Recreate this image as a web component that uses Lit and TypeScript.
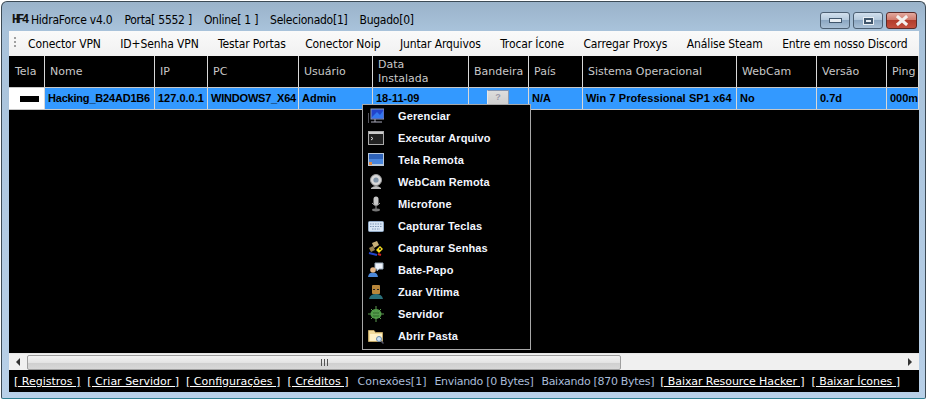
import { LitElement, html, css, svg } from "lit";
import { customElement } from "lit/decorators.js";

const toolbar = ["Conector VPN", "ID+Senha VPN", "Testar Portas", "Conector Noip", "Juntar Arquivos", "Trocar Ícone", "Carregar Proxys", "Análise Steam", "Entre em nosso Discord"];
const cols = [
  ["Tela", 36, "Hacking"], ["Nome", 110, "Hacking_B24AD1B6"], ["IP", 53, "127.0.0.1"], ["PC", 91, "WINDOWS7_X64"],
  ["Usuário", 74, "Admin"], ["Data\nInstalada", 96, "18-11-09"], ["Bandeira", 60, ""], ["País", 54, "N/A"],
  ["Sistema Operacional", 154, "Win 7 Professional SP1 x64"], ["WebCam", 80, "No"], ["Versão", 70, "0.7d"], ["Ping", 32, "000m"],
];

const icons: Record<string, unknown> = {
  gerenciar: svg`<rect x="3" y="1" width="13" height="10" fill="#2244cc" stroke="#8899bb"/><path d="M4 9 L9 4 L12 7 L15 3 V10 H4Z" fill="#3377ee"/><path d="M0 5 V15 M3 14 H14 M7 11 V14" stroke="#aab" fill="none"/>`,
  executar: svg`<rect x="0.5" y="1.5" width="15" height="13" fill="#222" stroke="#aaa"/><rect x="1" y="2" width="14" height="2" fill="#ccc"/><path d="M3 7 L5 8.5 L3 10" stroke="#ddd" fill="none"/>`,
  tela: svg`<rect x="0.5" y="1.5" width="15" height="12" fill="#4a86dc" stroke="#b8c8dc"/><rect x="1" y="2" width="14" height="5" fill="#2e62b8"/><rect x="1" y="12" width="14" height="2" fill="#b8c8d8"/><rect x="1" y="10" width="3" height="3" fill="#e08844"/>`,
  webcam: svg`<circle cx="8" cy="6" r="5.5" fill="#d8d8d8" stroke="#999"/><circle cx="8" cy="6" r="2.6" fill="#8094a8"/><path d="M3 14 Q8 10 13 14 V15 H3Z" fill="#bbb"/>`,
  mic: svg`<rect x="5.5" y="0.5" width="5" height="9" rx="2.5" fill="#c8c8c8"/><path d="M4 7 Q8 12 12 7 M8 10 V13" stroke="#999" fill="none"/><ellipse cx="8" cy="14" rx="4" ry="1.4" fill="#777"/>`,
  teclas: svg`<rect x="0.5" y="3.5" width="15" height="10" rx="1" fill="#d8e6f6" stroke="#90a8c4"/><path d="M2 6 H14 M2 8.5 H14 M4 11 H12" stroke="#7f96b4" stroke-dasharray="1.5 1"/>`,
  senhas: svg`<path d="M4 3 L9 1 L11 5 L6 8Z" fill="#c8b078"/><path d="M1 8 L5 6 L7 10 L3 12Z" fill="#9a8454"/><path d="M8 10 L12 6 L15 9 L11 13Z" fill="#f4dc1c"/><circle cx="12" cy="9" r="1" fill="#222"/><path d="M1 13 L9 15" stroke="#2244cc" stroke-width="2"/><path d="M10 14 L13 15" stroke="#cc2222" stroke-width="2"/>`,
  chat: svg`<path d="M7 1 H15 V7 H11 L9 9 V7 H7Z" fill="#eef3fb" stroke="#9ab"/><circle cx="5" cy="8" r="2.8" fill="#e8b888"/><path d="M0 15 Q1 10 5 11 Q9 10 10 15Z" fill="#4d88d8"/>`,
  zuar: svg`<rect x="4" y="1" width="8" height="9" rx="1" fill="#b8863a"/><rect x="5" y="5" width="2" height="1" fill="#222"/><rect x="9" y="5" width="2" height="1" fill="#222"/><path d="M1 15 Q2 10 8 10 Q14 10 15 15Z" fill="#2a6f7a"/>`,
  servidor: svg`<ellipse cx="8" cy="8" rx="5.5" ry="5" fill="#4d9a44"/><path d="M3 3 L13 13 M13 3 L3 13 M8 0 V16 M0 8 H16" stroke="#5c9a50" stroke-width="1"/><path d="M5 7 H11 M5 10 H11" stroke="#2c6a2a"/>`,
  pasta: svg`<path d="M0.5 2.5 H6 L7.5 4.5 H14.5 V13.5 H0.5Z" fill="#f2dc9c" stroke="#bfa566"/><rect x="2" y="6" width="12" height="7" fill="#fff2c8"/><circle cx="11" cy="11" r="2.5" fill="#cfe4f4" stroke="#6688aa"/><path d="M13 13 L15.5 15.5" stroke="#556" stroke-width="1.4"/>`,
};

const menu: [string, string][] = [
  ["Gerenciar", "gerenciar"], ["Executar Arquivo", "executar"], ["Tela Remota", "tela"], ["WebCam Remota", "webcam"],
  ["Microfone", "mic"], ["Capturar Teclas", "teclas"], ["Capturar Senhas", "senhas"], ["Bate-Papo", "chat"],
  ["Zuar Vítima", "zuar"], ["Servidor", "servidor"], ["Abrir Pasta", "pasta"],
];

@customElement("app-root")
export class AppRoot extends LitElement {
  static styles = css`
    :host { display: block; width: 929px; height: 403px; background: #fff; overflow: hidden; font-family: "DejaVu Sans", sans-serif; }
  `;
  render() {
    return html`<hf-window></hf-window>`;
  }
}

@customElement("hf-window")
export class HfWindow extends LitElement {
  static styles = css`
    :host { display: block; padding: 1px 2px 3px 1px; }
    .win { position: relative; width: 925px; height: 398px; box-sizing: border-box; border: 1px solid #3c4a55; border-bottom-color: #2f7f92; border-radius: 6px 6px 2px 2px;
      background: linear-gradient(180deg, #9ab3ca 0%, #a8c2da 7%, #b8d0e8 100%); padding: 0 7px 6px 7px; display: flex; flex-direction: column; }
    .title { height: 29px; flex: none; display: flex; align-items: center; padding-left: 2px; padding-top: 7px; box-sizing: border-box; font: 12px "DejaVu Sans Condensed", "DejaVu Sans", sans-serif; font-stretch: condensed; letter-spacing: -0.25px; color: #000; gap: 12px; position: relative; }
    .logo { font: bold 12px/1 "Liberation Mono", monospace; letter-spacing: -2.2px; color: #111; width: 18px; margin-right: -11px; margin-left: 1px; }
    .caps { position: absolute; right: 1px; top: 10px; display: flex; gap: 3px; }
    .cap { width: 30px; height: 17px; box-sizing: border-box; border: 1px solid #4c5f72; border-radius: 3px; display: flex; align-items: center; justify-content: center;
      background: linear-gradient(180deg, #d2e0ee 0%, #b5c9dc 45%, #8ca7c2 50%, #a9c0d6 100%); }
    .cap.close { width: 31px; background: linear-gradient(180deg, #e3a99f 0%, #d07a6c 45%, #b23c2c 50%, #c4503e 100%); border-color: #5a2a28; }
    .min { width: 11px; height: 3px; background: #e8eef4; border: 1px solid #40566c; }
    .max { width: 9px; height: 6px; border: 2px solid #40566c; background: #e8eef4; box-shadow: 0 0 0 1px #e8eef4; box-sizing: border-box; }
    .toolbar { height: 25px; flex: none; box-sizing: border-box; background: linear-gradient(180deg, #fafafa, #f1f1f1); display: flex; align-items: center; padding-left: 19px; gap: 19.5px; font: 12px "DejaVu Sans Condensed", "DejaVu Sans", sans-serif; font-stretch: condensed; letter-spacing: -0.12px; color: #000; position: relative; width: 910px; white-space: nowrap; }
    .grip { position: absolute; left: 5px; top: 6px; width: 2px; height: 12px; background: repeating-linear-gradient(180deg, #a0a0a0 0 2px, transparent 2px 4px); }
    .table { flex: 1; background: #000; width: 910px; overflow: hidden; min-height: 0; }
    .head { display: flex; height: 31px; }
    .hc { box-sizing: border-box; flex: none; border-right: 1px solid #d8d8d8; color: #c8c8c8; font: 11px/14px "DejaVu Sans", sans-serif; padding-left: 5px; display: flex; align-items: center; white-space: pre; }
    .hc:first-child { padding-left: 6px; }
    .row { display: flex; height: 23px; background: #3399ff; border-top: 1px solid #c8c8c8; border-bottom: 1px solid #c8c8c8; box-sizing: border-box; }
    .rc { box-sizing: border-box; flex: none; border-right: 1px solid #d8d8d8; color: #000; font: bold 11px/21px "Liberation Sans", sans-serif; padding-left: 3px; white-space: nowrap; overflow: hidden; display: flex; align-items: center; }
    .rc.tight { letter-spacing: -0.2px; }
    .rc.wide { letter-spacing: 0.08px; }
    .thumbcell { background: #fff; justify-content: center; padding: 0 0 0 6px; }
    .shot { width: 19px; height: 6px; background: #000; filter: blur(0.5px); }
    .flag { width: 22px; height: 15px; margin: -2px auto 0 18px; background: linear-gradient(180deg, #ddd, #cfcfcf); border: 1px solid #e8e8e8; border-right-color: #8a9ab0; border-top-color: #7f94b4; box-sizing: border-box; color: #99a; font: bold 9px/13px "Liberation Sans", sans-serif; text-align: center; }
    .sb { height: 17px; flex: none; width: 910px; background: #f0f0f0; display: flex; align-items: center; border-top: 1px solid #e6e6e6; box-sizing: border-box; position: relative; }
    .arrow { width: 18px; flex: none; display: flex; justify-content: center; }
    .thumb { width: 594px; height: 15px; box-sizing: border-box; flex: none; border: 1px solid #9f9f9f; border-radius: 2px; background: linear-gradient(180deg, #f4f4f4, #e4e4e4 50%, #cfcfcf 51%, #d8d8d8); display: flex; align-items: center; justify-content: center; }
    .grips { width: 7px; height: 7px; background: repeating-linear-gradient(90deg, #555 0 1px, transparent 1px 3px); }
    .spacer { flex: 1; }
    .status { height: 22px; flex: none; width: 910px; box-sizing: border-box; background: #000; display: flex; align-items: center; padding-left: 5px; gap: 7px; font: 11px "DejaVu Sans", sans-serif; white-space: nowrap; }
    .status a { color: #fff; text-decoration: underline; }
    .status a.n { letter-spacing: -0.08px; }
    .status a.h { margin-left: -1px; }
    .status span { color: #a9bcd8; }
    .status span.t { letter-spacing: -0.3px; margin-left: 1px; }
    .status span.c { margin-left: 2px; }
    .menu { position: absolute; left: 360px; top: 102px; width: 169px; height: 246px; box-sizing: border-box; background: #000; border: 1px solid #a8a8a8; padding: 0; z-index: 2; }
    .mi { height: 22px; display: flex; align-items: center; padding-left: 5px; gap: 14px; color: #f2f6ff; font: bold 11px "Liberation Sans", sans-serif; letter-spacing: 0.12px; }
    .mi svg { width: 16px; height: 16px; flex: none; }
  `;
  render() {
    return html`<div class="win">
      <div class="title">
        <span class="logo">HF4</span><span>HidraForce v4.0</span><span>Porta[ 5552 ]</span><span>Online[ 1 ]</span><span>Selecionado[1]</span><span>Bugado[0]</span>
        <div class="caps">
          <div class="cap"><div class="min"></div></div>
          <div class="cap"><div class="max"></div></div>
          <div class="cap close"><svg width="14" height="11" viewBox="0 0 14 11"><path d="M3 2 L11 9 M11 2 L3 9" stroke="#f4f0ee" stroke-width="3" stroke-linecap="square"/></svg></div>
        </div>
      </div>
      <div class="toolbar"><div class="grip"></div>${toolbar.map((t) => html`<span>${t}</span>`)}</div>
      <div class="table">
        <div class="head">${cols.map(([n, w]) => html`<div class="hc" style="width:${w}px">${n}</div>`)}</div>
        <div class="row">${cols.map(([n, w, v], i) =>
          i === 0
            ? html`<div class="rc thumbcell" style="width:${w}px"><div class="shot"></div></div>`
            : i === 6
            ? html`<div class="rc" style="width:${w}px;padding:0"><div class="flag">?</div></div>`
            : html`<div class="rc ${i === 1 || i === 3 ? "tight" : i === 8 ? "wide" : ""}" style="width:${w}px">${v}</div>`
        )}</div>
      </div>
      <div class="sb">
        <div class="arrow"><svg width="5" height="8" viewBox="0 0 5 8"><path d="M4 0 V8 L0 4Z" fill="#333"/></svg></div>
        <div class="thumb"><div class="grips"></div></div>
        <div class="spacer"></div>
        <div class="arrow"><svg width="5" height="8" viewBox="0 0 5 8"><path d="M0 0 V8 L4 4Z" fill="#333"/></svg></div>
      </div>
      <div class="status">
        <a>[ Registros ]</a><a>[ Criar Servidor ]</a><a>[ Configurações ]</a><a>[ Créditos ]</a>
        <span class="c">Conexões[1]</span><span class="t">Enviando [0 Bytes]</span><span class="t">Baixando [870 Bytes]</span>
        <a class="n h">[ Baixar Resource Hacker ]</a><a class="n">[ Baixar Ícones ]</a>
      </div>
      <div class="menu">${menu.map(([t, k]) => html`<div class="mi"><svg viewBox="0 0 16 16">${icons[k]}</svg><span>${t}</span></div>`)}</div>
    </div>`;
  }
}
